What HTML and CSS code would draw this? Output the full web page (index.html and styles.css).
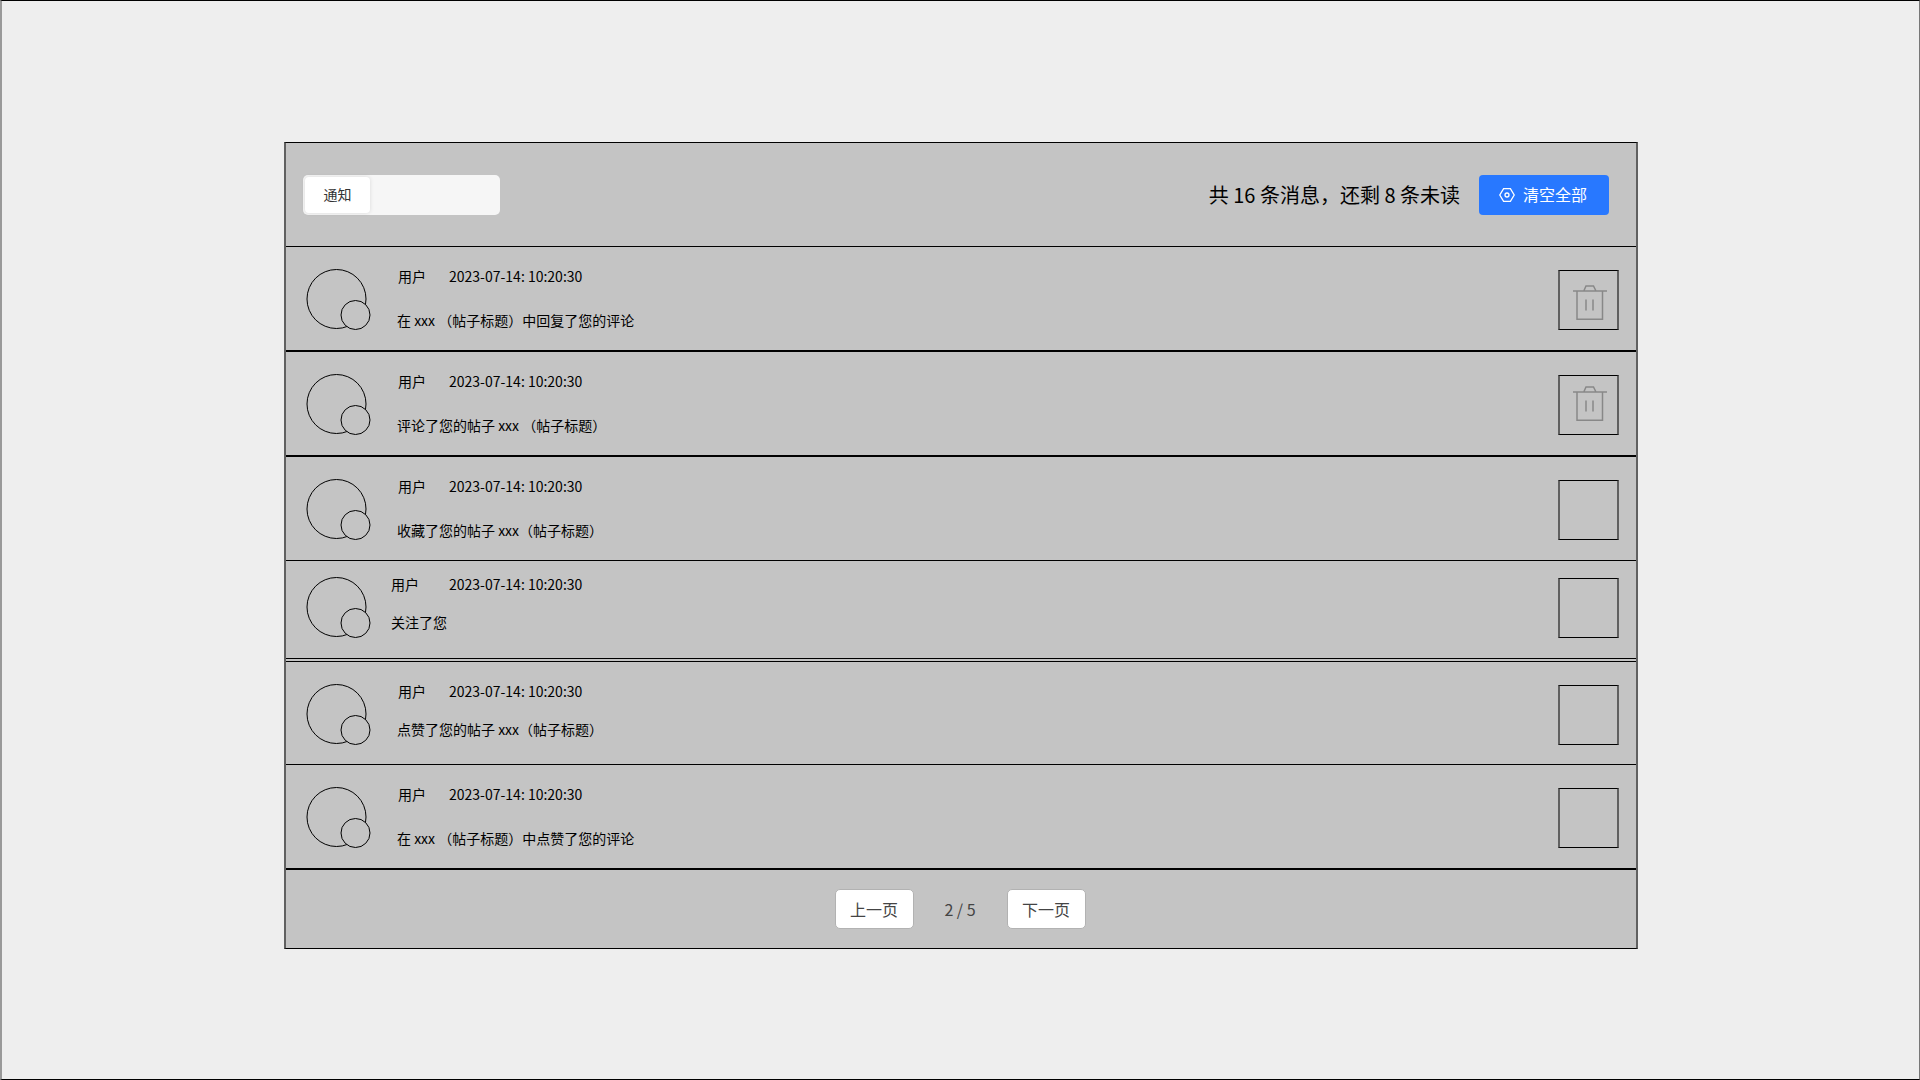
FILE: index.html
```html
<!DOCTYPE html>
<html lang="zh-CN">
<head>
<meta charset="utf-8">
<title>通知</title>
<meta name="viewport" content="width=device-width, initial-scale=1">
<link rel="stylesheet" href="styles.css">
</head>
<body>
<svg class="sprite" aria-hidden="true">
  <symbol id="avatar" viewBox="0 0 65 61">
    <circle cx="30.5" cy="30" r="29.5"/>
    <circle cx="49.5" cy="46" r="14.5"/>
  </symbol>
  <symbol id="trash" viewBox="0 0 34 36">
    <path d="M0 6H34M4 6V34.3H29.5V6M10.8 6L13 1H20.5L23 6M13 14.5V25.5M20 14.5V25.5"/>
  </symbol>
</svg>
<main class="page">
  <section class="panel">
    <header class="panel-header">
      <div class="tabs"><button class="tab" type="button">通知</button></div>
      <div class="summary">
        <p class="count">共 16 条消息，还剩 8 条未读</p>
        <button class="clear" type="button">
          <svg class="clear-icon" viewBox="0 0 16 16" aria-hidden="true"><path d="M4.6 1.7H11.4L15.2 8L11.4 14.3H4.6L0.8 8Z"/><circle cx="8" cy="8" r="2"/></svg>
          <span>清空全部</span>
        </button>
      </div>
    </header>
    <ul class="list">
      <li class="item thick">
        <svg class="avatar"><use href="#avatar"/></svg>
        <div class="body"><div class="meta"><span class="user">用户</span><time>2023-07-14: 10:20:30</time></div><p class="message">在 xxx （帖子标题）中回复了您的评论</p></div>
        <button class="remove" type="button" aria-label="删除"><svg class="trash"><use href="#trash"/></svg></button>
      </li>
      <li class="item thick">
        <svg class="avatar"><use href="#avatar"/></svg>
        <div class="body"><div class="meta"><span class="user">用户</span><time>2023-07-14: 10:20:30</time></div><p class="message">评论了您的帖子 xxx （帖子标题）</p></div>
        <button class="remove raised" type="button" aria-label="删除"><svg class="trash"><use href="#trash"/></svg></button>
      </li>
      <li class="item">
        <svg class="avatar"><use href="#avatar"/></svg>
        <div class="body"><div class="meta"><span class="user">用户</span><time>2023-07-14: 10:20:30</time></div><p class="message">收藏了您的帖子 xxx（帖子标题）</p></div>
        <button class="remove" type="button" aria-label="删除"></button>
      </li>
      <li class="item short tight">
        <svg class="avatar"><use href="#avatar"/></svg>
        <div class="body"><div class="meta"><span class="user">用户</span><time>2023-07-14: 10:20:30</time></div><p class="message">关注了您</p></div>
        <button class="remove" type="button" aria-label="删除"></button>
      </li>
      <li class="item separated tight">
        <svg class="avatar"><use href="#avatar"/></svg>
        <div class="body"><div class="meta"><span class="user">用户</span><time>2023-07-14: 10:20:30</time></div><p class="message">点赞了您的帖子 xxx（帖子标题）</p></div>
        <button class="remove" type="button" aria-label="删除"></button>
      </li>
      <li class="item thick">
        <svg class="avatar"><use href="#avatar"/></svg>
        <div class="body"><div class="meta"><span class="user">用户</span><time>2023-07-14: 10:20:30</time></div><p class="message">在 xxx （帖子标题）中点赞了您的评论</p></div>
        <button class="remove" type="button" aria-label="删除"></button>
      </li>
    </ul>
    <nav class="pager" aria-label="分页">
      <button class="page-button" type="button">上一页</button>
      <span class="page-number">2 / 5</span>
      <button class="page-button" type="button">下一页</button>
    </nav>
  </section>
</main>
</body>
</html>
```
FILE: styles.css
```css
* {
  box-sizing: border-box;
}

body {
  margin: 0;
  color: #000;
  font: 14px/22px "Noto Sans CJK SC", sans-serif;
}

button {
  margin: 0;
  padding: 0;
  border: 0;
  color: inherit;
  font: inherit;
  cursor: pointer;
}

p,
ul {
  margin: 0;
  padding: 0;
}

.sprite {
  display: block;
  width: 0;
  height: 0;
}

.page {
  min-height: 100vh;
  padding: 141px 281px 130px 282px;
  border: solid #000;
  border-width: 1px 1px 1px 2px;
  border-right-color: #777;
  border-left-color: #999;
  background: #eee;
}

.panel {
  border: solid #000;
  border-width: 1px 2px;
  border-right-color: #606060;
  border-left-color: #606060;
  background: #c4c4c4;
}

.panel-header {
  display: flex;
  align-items: center;
  justify-content: space-between;
  min-height: 104px;
  padding: 0 27px 0 17px;
  border-bottom: 1px solid #000;
}

.tabs {
  display: flex;
  width: 197px;
  padding: 2px;
  border-radius: 5px;
  background: #f6f6f6;
}

.tab {
  width: 65px;
  height: 36px;
  padding-bottom: 2px;
  border-radius: 4px;
  background: #fff;
  box-shadow: 0 0 4px rgba(0, 0, 0, 0.12);
  color: #333;
}

.summary {
  display: flex;
  align-items: center;
  gap: 19px;
}

.count {
  font-size: 20px;
  line-height: 30px;
}

.clear {
  display: flex;
  align-items: center;
  gap: 8px;
  height: 40px;
  padding: 0 22px 0 20px;
  border-radius: 4px;
  background: #2878ff;
  color: #fff;
  font-size: 16px;
}

.clear span {
  padding-bottom: 2px;
}

.clear-icon {
  width: 16px;
  height: 16px;
  fill: none;
  stroke: #fff;
  stroke-width: 1.3;
}

.list {
  list-style: none;
}

.item {
  display: flex;
  align-items: flex-start;
  padding: 18px 17px 19px 20px;
  border-bottom: 1px solid #000;
}

.item.thick {
  border-bottom-width: 2px;
}

.item.short {
  padding-top: 12px;
  padding-bottom: 20px;
}

.item.separated {
  margin-top: 2px;
  border-top: 1px solid #000;
}

.avatar {
  flex: none;
  width: 65px;
  height: 61px;
  margin-top: 4px;
  fill: #c4c4c4;
  stroke: #000;
}

.body {
  display: flex;
  flex: 1;
  flex-direction: column;
  gap: 22px;
  padding-left: 26px;
}

.tight .body {
  gap: 16px;
}

.short .body {
  padding-left: 20px;
}

.meta {
  display: flex;
  padding-left: 1px;
}

.user {
  width: 51px;
}

.short .meta {
  padding-left: 0;
}

.short .user {
  width: 58px;
}

.remove {
  display: flex;
  flex: none;
  width: 61px;
  height: 60px;
  margin-top: 5px;
  padding: 14px 0 0 13px;
  border: solid #000;
  border-width: 1px 2px;
  border-right-color: #606060;
  border-left-color: #606060;
  background: none;
}

.remove.raised {
  padding-top: 10px;
}

.trash {
  flex: none;
  width: 34px;
  height: 36px;
  fill: none;
  stroke: #888;
  stroke-width: 1.5;
}

.pager {
  display: flex;
  align-items: center;
  justify-content: center;
  min-height: 78px;
  padding-right: 2px;
  color: #444;
  font-size: 16px;
}

.page-button {
  width: 79px;
  height: 40px;
  border: 1px solid #b2b2b2;
  border-radius: 5px;
  background: #fff;
}

.page-number {
  width: 93px;
  text-align: center;
}
```
